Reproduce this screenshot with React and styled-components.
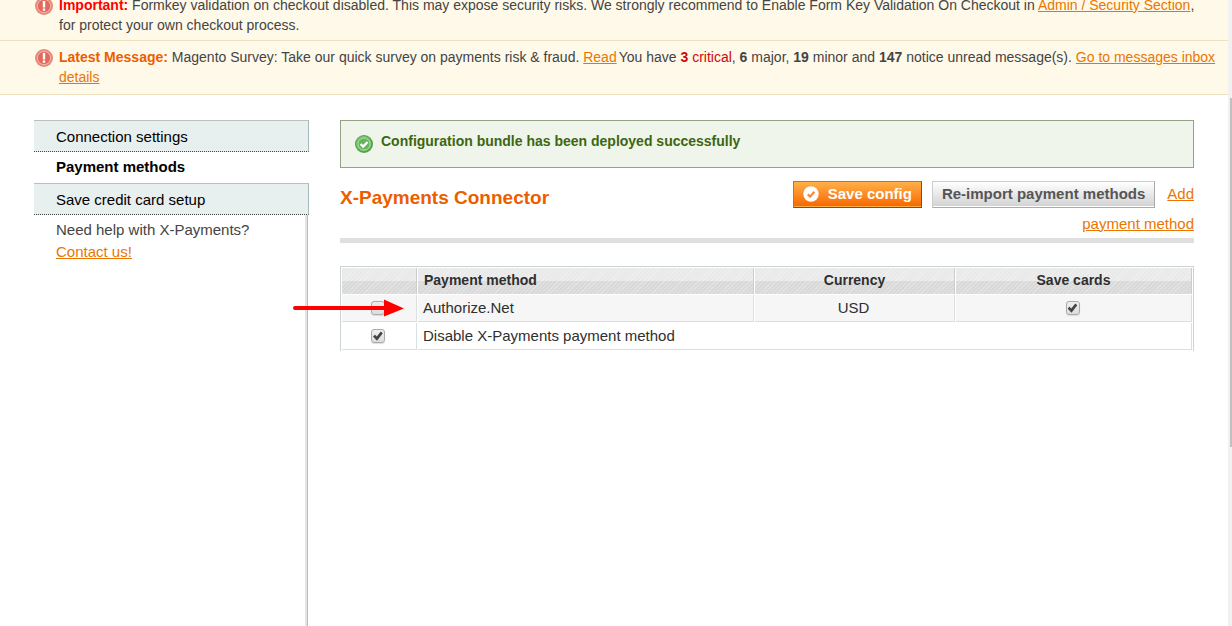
import React, { useState } from "react";
import styled, { createGlobalStyle } from "styled-components";

const GlobalStyle = createGlobalStyle`
  * {
    box-sizing: border-box;
  }

  body {
    margin: 0;
    background: #fff;
    color: #444;
    font-family: "Liberation Sans", Arial, Helvetica, sans-serif;
    font-size: 15px;
    line-height: 22px;
  }
`;

const Page = styled.div`
  display: flex;
  height: 100vh;
  overflow: hidden;
`;

const Content = styled.div`
  flex: 1;
  min-width: 0;
  display: flex;
  flex-direction: column;
`;

const ScrollTrack = styled.div`
  width: 4px;
  padding: 98px 0 0 2px;
  background: #f1f1f1;
`;

const ScrollThumb = styled.div`
  height: 349px;
  background: #c1c1c1;
`;

const Notices = styled.div`
  margin-top: -11px;
`;

const Notice = styled.div`
  display: flex;
  gap: 6px;
  padding: 6px 10px ${(props) => (props.$compact ? "5px" : "7px")} 35px;
  border-bottom: 1px solid #eee2be;
  background: #fff9e9;
  font-size: 14px;
  line-height: 20px;

  svg {
    flex: none;
    margin-top: 2px;
  }

  p {
    margin: 0;
  }
`;

const Label = styled.strong`
  color: ${(props) => (props.$critical ? "#f00" : "#eb5e00")};
`;

const Critical = styled.span`
  color: #d40707;
`;

const Link = styled.a`
  color: #ea7601;
  text-decoration: underline;
`;

const ReadLink = styled(Link)`
  margin-right: 2px;
`;

const Columns = styled.div`
  flex: 1;
  display: flex;
  gap: 31px;
  padding: 25px 34px 0;
`;

const Side = styled.aside`
  flex: none;
  width: 275px;
  display: flex;
  flex-direction: column;
`;

const TabList = styled.ul`
  margin: 0;
  padding: 0;
  list-style: none;
`;

const Tab = styled.a`
  display: block;
  height: ${(props) => (props.$active ? "31px" : "32px")};
  padding: ${(props) => (props.$active ? "4px 22px" : "5px 22px")};
  border: ${(props) => (props.$active ? "none" : "1px solid #bebebe")};
  border-left: none;
  border-right-color: #a3bcb9;
  border-bottom: ${(props) => (props.$active ? "none" : "1px dotted #444")};
  background: ${(props) => (props.$active ? "#fff" : "#e7efef")};
  color: #000;
  font-weight: ${(props) => (props.$active ? "bold" : "normal")};
  text-decoration: none;
`;

const Help = styled.div`
  flex: 1;
  margin-right: 1px;
  padding: 4px 22px;
  border-right: 1px solid #bbb;
  box-shadow: inset -2px 0 #e5e5e5;
`;

const Main = styled.main`
  flex: 1;
  min-width: 0;
`;

const Success = styled.div`
  display: flex;
  gap: 8px;
  height: 48px;
  padding: 10px 14px;
  border: 1px solid #95a486;
  background: #eff5ea;
  color: #3d6611;
  font-size: 14px;
  font-weight: bold;
  line-height: 20px;

  svg {
    flex: none;
    margin-top: 4px;
  }
`;

const Header = styled.div`
  display: flex;
  justify-content: space-between;
  margin: 12px 0 23px;
  border-bottom: 5px solid #dfdfdf;
`;

const Title = styled.h3`
  margin: 0;
  color: #eb5e00;
  font-size: 19px;
  line-height: 36px;
`;

const Actions = styled.div`
  max-width: 50%;
  text-align: right;
  line-height: 28px;
`;

const Button = styled.button`
  display: inline-flex;
  align-items: center;
  gap: 9px;
  height: 27px;
  margin: 0 10px 2px 0;
  padding: 0 9px 1px;
  border: 1px solid;
  border-color: ${(props) => (props.$primary ? "#ed6502 #a04300 #a04300 #ed6502" : "#ccc #aaa #aaa #ccc")};
  background: ${(props) =>
    props.$primary
      ? "linear-gradient(#ffb049, #f86a04 94%, #ffac47 96%)"
      : "linear-gradient(#fff, #d4d4d4 94%, #fff 96%)"};
  color: ${(props) => (props.$primary ? "#fff" : "#555")};
  font: bold 15px "Liberation Sans", Arial, sans-serif;
  vertical-align: middle;
  cursor: pointer;
`;

const AddLink = styled(Link)`
  margin-left: 2px;
`;

const Grid = styled.table`
  width: 100%;
  table-layout: fixed;
  border: 1px solid #cbd3d4;
  border-bottom: none;
  border-spacing: 1px;
  color: #2f2f2f;

  th,
  td {
    border-right: 1px solid #dadfe0;
    text-align: center;
  }

  th {
    height: 26px;
    padding: 0 6px 2px;
    border-right-color: #ccc;
    background:
      repeating-linear-gradient(135deg, rgba(255, 255, 255, 0.25) 0 1px, transparent 1px 3px),
      linear-gradient(#e9e9e9 50%, #d9d9d9 50%);
    font-size: 14px;
    line-height: 20px;
  }

  td {
    height: 27px;
    padding: 0 7px 0 5px;
    border-bottom: 1px solid #dadfe0;
  }

  tbody tr:nth-child(odd) td {
    background: #f6f6f6;
  }

  th.name,
  td.name {
    text-align: left;
  }
`;

const Check = styled.input`
  appearance: none;
  display: block;
  width: 14px;
  height: 14px;
  margin: 1px auto 0;
  border: 1px solid #aaa;
  border-radius: 3px;
  background: linear-gradient(#eee, #ddd);
  box-shadow: 0 1px 1px #ddd;

  &:checked {
    display: grid;
    place-items: center;
  }

  &:checked::before {
    content: "";
    width: 10px;
    height: 10px;
    background: #444;
    clip-path: polygon(0 55%, 20% 38%, 38% 55%, 78% 5%, 98% 22%, 40% 96%);
  }
`;

const ArrowAnchor = styled.td`
  position: relative;
`;

const Arrow = styled.svg`
  position: absolute;
  left: -49px;
  top: 4px;
  pointer-events: none;
`;

const AlertIcon = () => (
  <svg width="18" height="18" viewBox="0 0 18 18" aria-hidden="true">
    <circle cx="9" cy="9" r="9" fill="#e58a7d" />
    <circle cx="9" cy="9" r="6.6" fill="#e26a5c" stroke="#f5bdb1" strokeWidth="0.9" />
    <path d="M7.8 4h2.4v6.4H7.8zM7.8 11.6h2.4v2.2H7.8z" fill="#fff" />
  </svg>
);

const SuccessIcon = () => (
  <svg width="18" height="18" viewBox="0 0 18 18" aria-hidden="true">
    <circle cx="9" cy="9" r="9" fill="#56a04f" />
    <circle cx="8.7" cy="8.7" r="7.6" fill="#7cc074" />
    <circle cx="9" cy="9" r="6" fill="#62b558" stroke="#a9dba1" />
    <path d="M5.6 9.1l2.6 2.5 4.4-4.6" fill="none" stroke="#fff" strokeWidth="2.4" />
  </svg>
);

const SaveIcon = () => (
  <svg width="16" height="16" viewBox="0 0 16 16" aria-hidden="true">
    <circle cx="8" cy="8" r="7.7" fill="#fff" />
    <path d="M4.8 8.4l2.3 2.2 4.2-4.8" fill="none" stroke="#f58a3a" strokeWidth="2.2" />
  </svg>
);

const App = () => {
  const [enabled, setEnabled] = useState(false);
  const [saveCards, setSaveCards] = useState(true);
  const [disabled, setDisabled] = useState(true);

  return (
    <>
      <GlobalStyle />
      <Page>
        <Content>
          <Notices>
            <Notice $compact>
              <AlertIcon />
              <p>
                <Label $critical>Important:</Label> Formkey validation on checkout disabled. This may expose
                security risks. We strongly recommend to Enable Form Key Validation On Checkout in{" "}
                <Link href="#security">Admin / Security Section</Link>,
                <br />
                for protect your own checkout process.
              </p>
            </Notice>
            <Notice>
              <AlertIcon />
              <p>
                <Label>Latest Message:</Label> Magento Survey: Take our quick survey on payments risk &amp;
                fraud. <ReadLink href="#read">Read</ReadLink>
                You have{" "}
                <Critical>
                  <strong>3</strong> critical
                </Critical>
                , <strong>6</strong> major, <strong>19</strong> minor and <strong>147</strong> notice unread
                message(s). <Link href="#inbox">Go to messages inbox</Link>
                <br />
                <Link href="#details">details</Link>
              </p>
            </Notice>
          </Notices>

          <Columns>
            <Side>
              <TabList>
                <li>
                  <Tab href="#connection">Connection settings</Tab>
                </li>
                <li>
                  <Tab href="#methods" $active>
                    Payment methods
                  </Tab>
                </li>
                <li>
                  <Tab href="#cards">Save credit card setup</Tab>
                </li>
              </TabList>
              <Help>
                Need help with X-Payments?
                <br />
                <Link href="#contact">Contact us!</Link>
              </Help>
            </Side>

            <Main>
              <Success>
                <SuccessIcon />
                <span>Configuration bundle has been deployed successfully</span>
              </Success>

              <Header>
                <Title>X-Payments Connector</Title>
                <Actions>
                  <Button type="button" $primary>
                    <SaveIcon />
                    Save config
                  </Button>
                  <Button type="button">Re-import payment methods</Button>
                  <AddLink href="#add">Add payment method</AddLink>
                </Actions>
              </Header>

              <Grid>
                <colgroup>
                  <col style={{ width: 75 }} />
                  <col />
                  <col style={{ width: 200 }} />
                  <col style={{ width: 236 }} />
                </colgroup>
                <thead>
                  <tr>
                    <th />
                    <th className="name">Payment method</th>
                    <th>Currency</th>
                    <th>Save cards</th>
                  </tr>
                </thead>
                <tbody>
                  <tr>
                    <ArrowAnchor>
                      <Check
                        type="checkbox"
                        aria-label="Enable Authorize.Net"
                        checked={enabled}
                        onChange={(e) => setEnabled(e.target.checked)}
                      />
                      <Arrow width="112" height="18" viewBox="0 0 112 18" aria-hidden="true">
                        <path d="M2 9H94" stroke="#f00" strokeWidth="4" strokeLinecap="round" />
                        <path d="M91 0.5L111 9.5L91 17.5z" fill="#f00" />
                      </Arrow>
                    </ArrowAnchor>
                    <td className="name">Authorize.Net</td>
                    <td>USD</td>
                    <td>
                      <Check
                        type="checkbox"
                        aria-label="Save cards for Authorize.Net"
                        checked={saveCards}
                        onChange={(e) => setSaveCards(e.target.checked)}
                      />
                    </td>
                  </tr>
                  <tr>
                    <td>
                      <Check
                        type="checkbox"
                        id="disable-xp"
                        checked={disabled}
                        onChange={(e) => setDisabled(e.target.checked)}
                      />
                    </td>
                    <td className="name" colSpan="3">
                      <label htmlFor="disable-xp">Disable X-Payments payment method</label>
                    </td>
                  </tr>
                </tbody>
              </Grid>
            </Main>
          </Columns>
        </Content>
        <ScrollTrack>
          <ScrollThumb />
        </ScrollTrack>
      </Page>
    </>
  );
};

export default App;
